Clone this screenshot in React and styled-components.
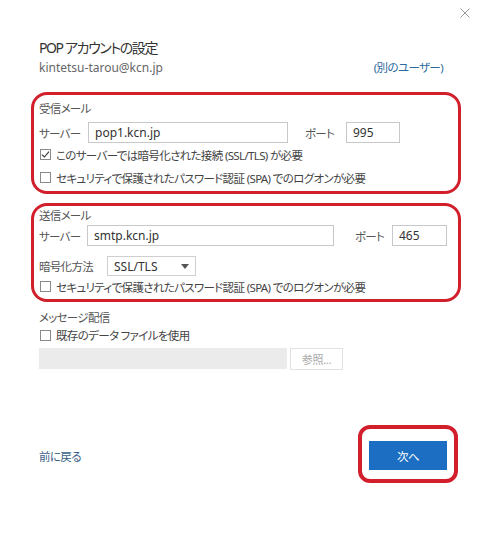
import React from 'react';
import styled, { createGlobalStyle } from 'styled-components';

const GlobalStyle = createGlobalStyle`
  html, body {
    margin: 0;
    padding: 0;
    background: #ffffff;
  }
  body {
    font-family: "Noto Sans", "Noto Sans CJK JP", sans-serif;
    font-feature-settings: "palt";
    color: #444;
  }
`;

const RED = '#d1202c';

const Dialog = styled.div`
  width: 486px;
  height: 533px;
  box-sizing: border-box;
  display: flex;
  flex-direction: column;
  background: #fff;
`;

const TopBar = styled.div`
  display: flex;
  justify-content: flex-end;
  padding: 7px 15px 0 0;
  height: 13px;
`;

const CloseButton = styled.button`
  border: none;
  background: none;
  padding: 0;
  width: 12px;
  height: 12px;
  display: flex;
  align-items: center;
  justify-content: center;
  cursor: pointer;
`;

const Header = styled.div`
  padding: 17px 43px 0 39px;
`;

const Title = styled.h1`
  margin: 0;
  font-size: 14px;
  font-weight: 400;
  letter-spacing: -1.4px;
  color: #333;
  line-height: 22px;
`;

const AccountRow = styled.div`
  display: flex;
  justify-content: space-between;
  align-items: center;
  font-size: 12px;
  line-height: 18px;
  color: #666;
`;

const OtherUser = styled.a`
  color: #2c6a9e;
  text-decoration: none;
  font-size: 11.5px;
  letter-spacing: -0.6px;
`;

const MarkBox = styled.section`
  margin: ${p => p.$top}px 25px 0 31px;
  border: 3.5px solid ${RED};
  border-radius: 16px;
  padding: ${p => p.$pt}px 6px 2px 5px;
  display: flex;
  flex-direction: column;
`;

const SectionLabel = styled.div`
  font-size: 11.5px;
  letter-spacing: -0.7px;
  line-height: 18px;
  color: #555;
  margin-bottom: ${p => p.$gap || 0}px;
`;

const FieldRow = styled.div`
  display: flex;
  align-items: center;
  height: ${p => p.$h || 21}px;
  margin-bottom: ${p => p.$mb || 0}px;
`;

const FieldLabel = styled.span`
  width: ${p => p.$w}px;
  margin-left: ${p => p.$ml || 0}px;
  font-size: 11.5px;
  letter-spacing: -0.7px;
  color: #555;
  white-space: nowrap;
  flex-shrink: 0;
`;

const TextInput = styled.div`
  width: ${p => p.$w}px;
  height: 21px;
  box-sizing: border-box;
  border: 1px solid #c8c8c8;
  padding: 0 6px;
  display: flex;
  align-items: center;
  font-size: 12px;
  color: #333;
  background: ${p => (p.$disabled ? '#ebebeb' : '#fff')};
  border-color: ${p => (p.$disabled ? '#ebebeb' : '#c8c8c8')};
  flex-shrink: 0;
`;

const Select = styled.div`
  width: 89px;
  height: 20px;
  box-sizing: border-box;
  border: 1px solid #cfcfcf;
  padding: 0 6px;
  display: flex;
  align-items: center;
  justify-content: space-between;
  font-size: 12px;
  color: #333;
`;

const CheckRow = styled.label`
  display: flex;
  align-items: center;
  height: ${p => p.$h || 23}px;
  font-size: 11.5px;
  letter-spacing: -0.65px;
  color: #444;
  gap: 5px;
  padding-left: 1px;
  white-space: nowrap;
`;

const Box = styled.span`
  width: 11px;
  height: 11px;
  box-sizing: border-box;
  border: 1px solid #8a8a8a;
  background: #fff;
  display: flex;
  align-items: center;
  justify-content: center;
  flex-shrink: 0;
`;

const Delivery = styled.section`
  padding: 7px 0 0 39px;
  display: flex;
  flex-direction: column;
`;

const BrowseRow = styled.div`
  display: flex;
  gap: 3px;
  margin-top: 5px;
`;

const BrowseButton = styled.button`
  width: 53px;
  height: 22px;
  border: 1px solid #e2e2e2;
  background: #fff;
  color: #aaa;
  font-family: inherit;
  font-size: 11px;
  letter-spacing: -0.3px;
  padding: 0;
`;

const Footer = styled.div`
  margin-top: auto;
  margin-bottom: 50px;
  display: flex;
  justify-content: space-between;
  align-items: center;
  padding: 0 28px 0 39px;
`;

const BackLink = styled.a`
  color: #3a5f86;
  font-size: 11.5px;
  letter-spacing: -0.6px;
  text-decoration: none;
  margin-top: 4px;
`;

const ButtonRing = styled.div`
  border: 4px solid ${RED};
  border-radius: 12px;
  padding: 12px 7px 9px 7px;
`;

const PrimaryButton = styled.button`
  width: 78px;
  height: 29px;
  border: none;
  background: #1b6ec2;
  color: #fff;
  font-family: inherit;
  font-size: 11.5px;
  letter-spacing: -0.5px;
  display: block;
`;

const Check = ({ checked }) => (
  <Box>
    {checked && (
      <svg width="9" height="9" viewBox="0 0 9 9">
        <path d="M1 4.6 L3.4 7 L8 1.6" fill="none" stroke="#333" strokeWidth="1.1" />
      </svg>
    )}
  </Box>
);

export default function App() {
  return (
    <>
      <GlobalStyle />
      <Dialog>
        <TopBar>
          <CloseButton aria-label="閉じる">
            <svg width="10" height="10" viewBox="0 0 10 10">
              <path d="M0.5 0.5 L9.5 9.5 M9.5 0.5 L0.5 9.5" stroke="#999" strokeWidth="1" />
            </svg>
          </CloseButton>
        </TopBar>

        <Header>
          <Title>POP アカウントの設定</Title>
          <AccountRow>
            <span>kintetsu-tarou@kcn.jp</span>
            <OtherUser>(別のユーザー)</OtherUser>
          </AccountRow>
        </Header>

        <MarkBox $top={15} $pt={5}>
          <SectionLabel $gap={4}>受信メール</SectionLabel>
          <FieldRow>
            <FieldLabel $w={49}>サーバー</FieldLabel>
            <TextInput $w={200}>pop1.kcn.jp</TextInput>
            <FieldLabel $w={41} $ml={17}>ポート</FieldLabel>
            <TextInput $w={54}>995</TextInput>
          </FieldRow>
          <CheckRow>
            <Check checked />
            このサーバーでは暗号化された接続 (SSL/TLS) が必要
          </CheckRow>
          <CheckRow>
            <Check />
            セキュリティで保護されたパスワード認証 (SPA) でのログオンが必要
          </CheckRow>
        </MarkBox>

        <MarkBox $top={9} $pt={1}>
          <SectionLabel>送信メール</SectionLabel>
          <FieldRow $mb={10}>
            <FieldLabel $w={48}>サーバー</FieldLabel>
            <TextInput $w={247}>smtp.kcn.jp</TextInput>
            <FieldLabel $w={37} $ml={21}>ポート</FieldLabel>
            <TextInput $w={55}>465</TextInput>
          </FieldRow>
          <FieldRow $h={20}>
            <FieldLabel $w={68}>暗号化方法</FieldLabel>
            <Select>
              <span>SSL/TLS</span>
              <svg width="8" height="5" viewBox="0 0 8 5">
                <path d="M0 0 L8 0 L4 5 Z" fill="#555" />
              </svg>
            </Select>
          </FieldRow>
          <CheckRow $h={21}>
            <Check />
            セキュリティで保護されたパスワード認証 (SPA) でのログオンが必要
          </CheckRow>
        </MarkBox>

        <Delivery>
          <SectionLabel>メッセージ配信</SectionLabel>
          <CheckRow $h={16}>
            <Check />
            既存のデータ ファイルを使用
          </CheckRow>
          <BrowseRow>
            <TextInput $w={248} $disabled />
            <BrowseButton>参照...</BrowseButton>
          </BrowseRow>
        </Delivery>

        <Footer>
          <BackLink>前に戻る</BackLink>
          <ButtonRing>
            <PrimaryButton>次へ</PrimaryButton>
          </ButtonRing>
        </Footer>
      </Dialog>
    </>
  );
}
